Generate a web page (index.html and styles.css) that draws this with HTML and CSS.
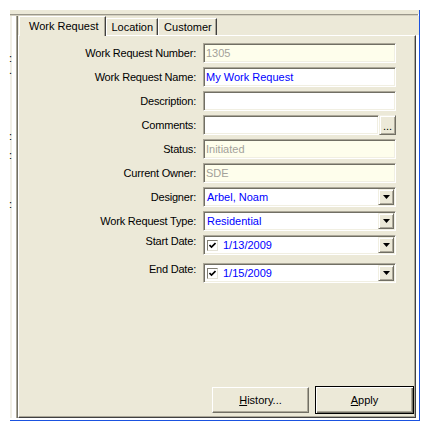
FILE: index.html
```html
<!DOCTYPE html>
<html>
<head>
    <meta charset="utf-8">
    <title>Work Request</title>
    <link rel="stylesheet" href="styles.css">
</head>
<body>
    <div class="frame">
        <div class="topband"></div>
        <div class="topline"></div>
        <div class="main">
            <div class="side">
                <div class="colon c1">:</div>
                <div class="colon c2">.</div>
                <div class="colon c3">:</div>
                <div class="colon c4">:</div>
                <div class="colon c5">:</div>
            </div>
            <div class="tabs">
                <div class="tabrow">
                    <div class="tab tab--active">Work Request</div>
                    <div class="tab">Location</div>
                    <div class="tab">Customer</div>
                </div>
                <div class="panel">
                    <div class="form">
                        <div class="label">Work Request Number:</div>
                        <div class="field field--readonly">1305</div>

                        <div class="label">Work Request Name:</div>
                        <div class="field">My Work Request</div>

                        <div class="label">Description:</div>
                        <div class="field"></div>

                        <div class="label">Comments:</div>
                        <div class="combo">
                            <div class="field combo__input"></div>
                            <div class="dots-btn">...</div>
                        </div>

                        <div class="label">Status:</div>
                        <div class="field field--readonly">Initiated</div>

                        <div class="label">Current Owner:</div>
                        <div class="field field--readonly">SDE</div>

                        <div class="label">Designer:</div>
                        <div class="field field--select">
                            <span>Arbel, Noam</span>
                            <span class="drop"><svg width="7" height="4" viewBox="0 0 7 4"><path d="M0 0h7L3.5 4z" fill="#000"/></svg></span>
                        </div>

                        <div class="label">Work Request Type:</div>
                        <div class="field field--select">
                            <span>Residential</span>
                            <span class="drop"><svg width="7" height="4" viewBox="0 0 7 4"><path d="M0 0h7L3.5 4z" fill="#000"/></svg></span>
                        </div>

                        <div class="label label--top">Start Date:</div>
                        <div class="field field--select field--date">
                            <span class="check"><svg width="7" height="7" viewBox="0 0 7 7"><path d="M0.5 3l2 2 4-4" fill="none" stroke="#000" stroke-width="1.6"/></svg></span>
                            <span>1/13/2009</span>
                            <span class="drop"><svg width="7" height="4" viewBox="0 0 7 4"><path d="M0 0h7L3.5 4z" fill="#000"/></svg></span>
                        </div>

                        <div class="label label--top row--gap">End Date:</div>
                        <div class="field field--select field--date row--gap">
                            <span class="check"><svg width="7" height="7" viewBox="0 0 7 7"><path d="M0.5 3l2 2 4-4" fill="none" stroke="#000" stroke-width="1.6"/></svg></span>
                            <span>1/15/2009</span>
                            <span class="drop"><svg width="7" height="4" viewBox="0 0 7 4"><path d="M0 0h7L3.5 4z" fill="#000"/></svg></span>
                        </div>
                    </div>

                    <div class="actions">
                        <div class="btn"><u>H</u>istory...</div>
                        <div class="btn btn--default"><u>A</u>pply</div>
                    </div>
                </div>
            </div>
        </div>
    </div>
</body>
</html>
```

FILE: styles.css
```css
* {
    box-sizing: border-box;
}

html, body {
    margin: 0;
    padding: 0;
}

body {
    background: #fff;
    font: 11px/13px "Liberation Sans", Arial, sans-serif;
    color: #000;
}

.frame {
    margin: 10px 0 0 10px;
    width: 410px;
    height: 411px;
    border-right: 1px solid #1a52e0;
    border-bottom: 1px solid #1a52e0;
    background: #fff;
    display: flex;
    flex-direction: column;
}

.topband {
    height: 4px;
    background: #ece9d8;
}

.topline {
    height: 2px;
    border-top: 1px solid #9a978b;
    border-bottom: 1px solid #d4d0c0;
    margin-right: 1px;
    background: #ece9d8;
}

.main {
    display: flex;
    height: 404px;
}

.side {
    width: 8px;
    height: 402px;
    background: #fff;
    border-left: 2px solid #f1efe6;
    border-right: 1px solid #716f64;
    box-shadow: inset -1px 0 #aca899;
    display: flex;
    flex-direction: column;
}

.colon {
    font-size: 11px;
    line-height: 11px;
    height: 11px;
    margin-left: -3px;
}

.c1 { margin-top: 37px; }
.c2 { margin-top: 1px; }
.c3 { margin-top: 55px; }
.c4 { margin-top: 8px; }
.c5 { margin-top: 38px; }

.tabs {
    width: 401px;
    display: flex;
    flex-direction: column;
    background: #fff;
}

.tabrow {
    height: 19px;
    display: flex;
    align-items: flex-start;
    padding-left: 1px;
    background: #ece9d8;
}

.tab {
    height: 17px;
    margin-top: 2px;
    padding: 2px 4px 0 5px;
    border-top: 1px solid #fff;
    border-left: 1px solid #fff;
    border-right: 1px solid #404040;
    box-shadow: inset -1px 0 #aca899;
    background: #ece9d8;
    white-space: nowrap;
}

.tab--active {
    position: relative;
    z-index: 1;
    height: 20px;
    margin-top: 0;
    padding: 3px 6px 0 9px;
}

.panel {
    width: 398px;
    height: 383px;
    background: #ece9d8;
    border-top: 1px solid #fff;
    border-left: 1px solid #fff;
    border-right: 1px solid #404040;
    border-bottom: 1px solid #404040;
    box-shadow: inset -1px -1px #aca899;
    display: flex;
    flex-direction: column;
    padding: 7px 1px 3px 0;
}

.form {
    display: grid;
    grid-template-columns: 177px 193px;
    column-gap: 7px;
    row-gap: 4px;
}

.label {
    align-self: center;
    text-align: right;
    white-space: nowrap;
    letter-spacing: -0.2px;
}

.label--top {
    align-self: start;
}

.row--gap {
    margin-top: 4px;
}

.field {
    height: 20px;
    display: flex;
    align-items: center;
    padding-left: 2px;
    background: #fff;
    color: #0000ff;
    border: 1px solid;
    border-color: #aca899 #fff #fff #aca899;
    box-shadow: inset 1px 1px #716f64, inset -1px -1px #f1efe2;
    white-space: nowrap;
}

.field--readonly {
    background: #fefeec;
    color: #a3a19a;
}

.field--select {
    padding: 0 1px 0 3px;
}

.field--date .check {
    width: 11px;
    height: 11px;
    border: 1px solid;
    border-color: #7f7d72 #e4e2d6 #e4e2d6 #7f7d72;
    background: #fff;
    display: flex;
    align-items: center;
    justify-content: center;
    margin-right: 5px;
}

.drop {
    margin-left: auto;
    width: 16px;
    height: 16px;
    display: flex;
    align-items: center;
    justify-content: center;
    background: #ece9d8;
    border: 1px solid;
    border-color: #f1efe2 #716f64 #716f64 #f1efe2;
    box-shadow: inset 1px 1px #fff, inset -1px -1px #aca899;
}

.combo {
    display: flex;
}

.combo__input {
    width: 176px;
}

.dots-btn {
    width: 17px;
    height: 20px;
    background: #ece9d8;
    border: 1px solid;
    border-color: #f1efe2 #716f64 #716f64 #f1efe2;
    box-shadow: inset 1px 1px #fff, inset -1px -1px #aca899;
    display: flex;
    align-items: flex-end;
    justify-content: center;
    line-height: 10px;
    padding-bottom: 3px;
}

.actions {
    margin-top: auto;
    display: flex;
    justify-content: flex-end;
    align-items: center;
    gap: 6px;
}

.btn {
    width: 97px;
    height: 26px;
    display: flex;
    align-items: center;
    justify-content: center;
    background: #ece9d8;
    border: 1px solid;
    border-color: #fff #716f64 #716f64 #fff;
    box-shadow: inset -1px -1px #aca899;
}

.btn--default {
    width: 99px;
    height: 28px;
    border: 1px solid #000;
    box-shadow: inset 1px 1px #fff, inset -1px -1px #716f64, inset -2px -2px #aca899;
}
```
